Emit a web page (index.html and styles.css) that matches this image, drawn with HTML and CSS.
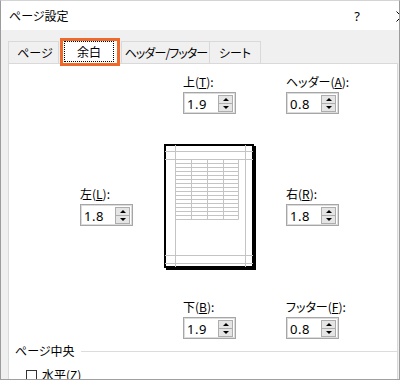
FILE: index.html
```html
<!DOCTYPE html>
<html lang="ja">
<head>
  <meta charset="UTF-8" />
  <title>ページ設定</title>
  <link rel="stylesheet" href="styles.css">
</head>
<body>
  <div class="window">
    <div class="titlebar">
      <span class="title">ページ設定</span>
      <span class="help">?</span>
      <svg class="close" width="11" height="11" viewBox="0 0 11 11">
        <path d="M0.5 0.5L10.5 10.5M10.5 0.5L0.5 10.5" stroke="#000" stroke-width="1" fill="none"/>
      </svg>
    </div>

    <div class="tabs">
      <div class="tab tab-page">ページ</div>
      <div class="tab active"><span class="focus">余白</span></div>
      <div class="tab tab-hf">ヘッダー/フッター</div>
      <div class="tab tab-sheet">シート</div>
    </div>

    <div class="panel">
      <!-- Marges -->
      <div class="margins">
        <div class="field f-top">
          <div class="label">上(<u>T</u>):</div>
          <div class="spin"><span class="val">1.9</span><span class="btns"><i class="up"></i><i class="down"></i></span></div>
        </div>
        <div class="field f-header">
          <div class="label">ヘッダー(<u>A</u>):</div>
          <div class="spin"><span class="val">0.8</span><span class="btns"><i class="up"></i><i class="down"></i></span></div>
        </div>

        <div class="field f-left">
          <div class="label">左(<u>L</u>):</div>
          <div class="spin"><span class="val">1.8</span><span class="btns"><i class="up"></i><i class="down"></i></span></div>
        </div>
        <div class="preview">
          <svg width="95" height="128" viewBox="0 0 95 128">
            <rect x="3" y="3" width="90" height="124" fill="#000"/>
            <rect x="2" y="2" width="88" height="122" fill="#fff" stroke="#000" stroke-width="2"/>
            <path d="M12.5 2V124M82.5 2V124M2 8.5H90M2 16.5H90M2 112.5H90M2 120.5H90" stroke="#c4c4c4" stroke-width="1" fill="none"/>
            <path d="M28.5 16.5V76.5M44.5 16.5V76.5M60.5 16.5V76.5M75.5 16.5V76.5
                     M12.5 20.5H75.5M12.5 24.5H75.5M12.5 28.5H75.5M12.5 32.5H75.5M12.5 36.5H75.5
                     M12.5 40.5H75.5M12.5 44.5H75.5M12.5 48.5H75.5M12.5 52.5H75.5M12.5 56.5H75.5
                     M12.5 60.5H75.5M12.5 64.5H75.5M12.5 68.5H75.5M12.5 72.5H75.5M12.5 76.5H75.5"
                  stroke="#c4c4c4" stroke-width="1" fill="none"/>
          </svg>
        </div>
        <div class="field f-right">
          <div class="label">右(<u>R</u>):</div>
          <div class="spin"><span class="val">1.8</span><span class="btns"><i class="up"></i><i class="down"></i></span></div>
        </div>

        <div class="field f-bottom">
          <div class="label">下(<u>B</u>):</div>
          <div class="spin"><span class="val">1.9</span><span class="btns"><i class="up"></i><i class="down"></i></span></div>
        </div>
        <div class="field f-footer">
          <div class="label">フッター(<u>F</u>):</div>
          <div class="spin"><span class="val">0.8</span><span class="btns"><i class="up"></i><i class="down"></i></span></div>
        </div>
      </div>

      <!-- Centrage -->
      <div class="group">
        <span>ページ中央</span>
        <span class="group-line"></span>
      </div>
      <div class="check">
        <span class="box"></span>
        <span>水平(<u>Z</u>)</span>
      </div>
    </div>
  </div>
</body>
</html>
```

FILE: styles.css
```css
* {
  margin: 0;
  padding: 0;
  box-sizing: border-box;
}

body {
  font-family: "Noto Sans CJK JP", sans-serif;
  font-size: 12px;
  font-feature-settings: "palt" 1;
  color: #000;
  background: #fff;
}

.window {
  width: 400px;
  height: 380px;
  display: flex;
  flex-direction: column;
  background: #f0f0f0;
  border-left: 1px solid #9c9c9c;
  border-right: 1px solid #9c9c9c;
  border-bottom: 1px solid #a0a0a0;
  border-top: 1px solid #d4d4d4;
  overflow: hidden;
}

/* Barre de titre */
.titlebar {
  height: 29px;
  flex-shrink: 0;
  background: #fff;
  display: flex;
  align-items: center;
  padding-left: 8px;
  line-height: 16px;
}

.title {
  flex: 1;
  margin-top: 1px;
}

.help {
  font-family: "Noto Sans", sans-serif;
  font-size: 13px;
  margin-right: 36px;
  margin-top: 1px;
}

.close {
  flex-shrink: 0;
  margin-right: -8px;
  margin-top: 1px;
}

/* Onglets */
.tabs {
  height: 33px;
  flex-shrink: 0;
  display: flex;
  align-items: flex-end;
  padding-left: 7px;
}

.tab {
  height: 22px;
  border: 1px solid #d9d9d9;
  border-bottom: none;
  background: #f0f0f0;
  display: flex;
  align-items: center;
  justify-content: center;
  line-height: 16px;
  white-space: nowrap;
}

.tab-page {
  width: 51px;
  padding-left: 3px;
}

.tab-hf {
  width: 89px;
  margin-left: 1px;
  letter-spacing: -0.9px;
  padding-left: 1px;
}

.tab-sheet {
  width: 52px;
  margin-left: -1px;
}

.tab.active {
  width: 60px;
  height: 28px;
  margin-bottom: -3px;
  margin-left: 1px;
  border: 3px solid #ef6a2a;
  background: #fff;
  align-items: flex-start;
  justify-content: flex-start;
  position: relative;
  z-index: 1;
}

.tab.active .focus {
  width: 50px;
  height: 21px;
  margin: 0 0 0 1px;
  border: 1px dotted #000;
  display: flex;
  align-items: center;
  justify-content: center;
}

/* Panneau */
.panel {
  flex: 1;
  margin: 0 1px 0 7px;
  background: #fff;
  border: 1px solid #d9d9d9;
  border-bottom: none;
  padding: 10px 0 0 6px;
  overflow: hidden;
}

.margins {
  display: grid;
  grid-template-columns: 83px 123px 53px;
  margin-left: 65px;
  align-items: start;
}

.field {
  display: flex;
  flex-direction: column;
}

.label {
  line-height: 16px;
  height: 16px;
  margin-bottom: 2px;
  white-space: nowrap;
}

.f-top,
.f-bottom {
  grid-column: 2;
  margin-left: 20px;
}

.f-header,
.f-footer {
  grid-column: 3;
}

.f-left,
.f-right {
  margin-top: 72px;
}

.preview {
  grid-column: 2;
  margin: 29px 0 28px;
  height: 128px;
}

.preview svg {
  display: block;
}

/* Champ numérique */
.spin {
  width: 53px;
  height: 22px;
  border: 1px solid #a6a6a6;
  box-shadow: inset 0 0 0 1px #dcdcdc;
  display: flex;
  align-items: flex-start;
}

.spin .val {
  font-family: "Noto Sans", sans-serif;
  font-size: 13px;
  line-height: 16px;
  padding: 3px 0 0 3px;
  flex: 1;
  letter-spacing: 0.5px;
}

.spin .btns {
  display: flex;
  flex-direction: column;
  margin: 2px 2px 0 0;
}

.spin .btns i {
  width: 15px;
  height: 9px;
  border: 1px solid #adadad;
  background: #e5e5e5;
  display: flex;
  align-items: center;
  justify-content: center;
}

.spin .btns i + i {
  margin-top: -1px;
}

.spin .up::after {
  content: "";
  border-left: 3px solid transparent;
  border-right: 3px solid transparent;
  border-bottom: 3px solid #000;
}

.spin .down::after {
  content: "";
  border-left: 3px solid transparent;
  border-right: 3px solid transparent;
  border-top: 3px solid #000;
}

/* Groupe "ページ中央" */
.group {
  display: flex;
  align-items: center;
  gap: 6px;
  margin-top: 4px;
  line-height: 16px;
}

.group-line {
  flex: 1;
  height: 1px;
  background: #dcdcdc;
}

.check {
  display: flex;
  align-items: center;
  gap: 5px;
  margin: 8px 0 0 11px;
  line-height: 16px;
}

.check .box {
  width: 11px;
  height: 11px;
  border: 1px solid #333;
  background: #fff;
}
```
